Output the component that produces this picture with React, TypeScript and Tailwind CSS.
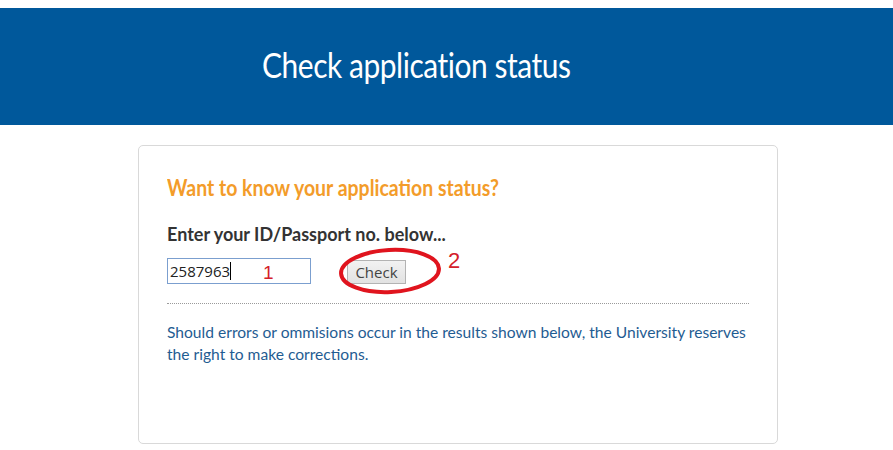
export default function App() {
  return (
    <div className="w-[893px] h-[450px] bg-white overflow-hidden" style={{ fontFamily: "Lato, 'Open Sans', sans-serif" }}>
      <div className="h-[8px]" />
      <header className="h-[117px] bg-[#00589b] flex items-center pl-[262px] pb-[4px]">
        <h1 className="text-white text-[34px] leading-none tracking-[-0.5px] origin-left scale-x-[0.88] whitespace-nowrap">
          Check application status
        </h1>
      </header>

      <div className="mt-[20px] ml-[138px] w-[640px] h-[299px] border border-[#d9d9d9] rounded-[5px] px-[28px] pt-[31px]">
        <h2 className="text-[#f39c2a] text-[22px] font-bold leading-none origin-left scale-x-[0.885] whitespace-nowrap">
          Want to know your application status?
        </h2>

        <p className="mt-[26px] text-[#333333] text-[18px] font-bold leading-none">
          Enter your ID/Passport no. below...
        </p>

        <div className="relative mt-[15px] flex items-center h-[26px]">
          <div className="relative w-[144px] h-[26px] border border-[#7b9fcf] flex items-center pl-[2px] text-[15px] text-[#222] [font-family:'Open_Sans',sans-serif]">
            <span>2587963</span>
            <span className="w-px h-[18px] bg-black" />
            <span className="absolute left-[95px] top-[2px] text-[#d4202a] text-[19px] leading-[24px] [font-family:'Liberation_Sans',sans-serif]">1</span>
          </div>
          <button className="ml-[36px] w-[59px] h-[24px] mt-[2px] bg-gradient-to-b from-[#f2f2f2] to-[#e2e2e2] border border-[#b3b3b3] text-[15px] text-[#444] leading-none [font-family:'Open_Sans',sans-serif]">
            Check
          </button>
          <svg className="absolute left-[171px] top-[-12px]" width="106" height="50" viewBox="0 0 106 50">
            <ellipse cx="52" cy="25" rx="49" ry="21" fill="none" stroke="#e0141e" strokeWidth="4" transform="rotate(-3 52 25)" />
          </svg>
          <span className="absolute left-[281px] top-[-8px] text-[#d4202a] text-[22px] leading-none [font-family:'Liberation_Sans',sans-serif]">2</span>
        </div>

        <div className="mt-[19px] border-t border-dotted border-[#9a9a9a]" />

        <p className="mt-[17px] text-[#1f5c92] text-[15.6px] leading-[22px]">
          Should errors or ommisions occur in the results shown below, the University reserves the right to make corrections.
        </p>
      </div>
    </div>
  );
}
